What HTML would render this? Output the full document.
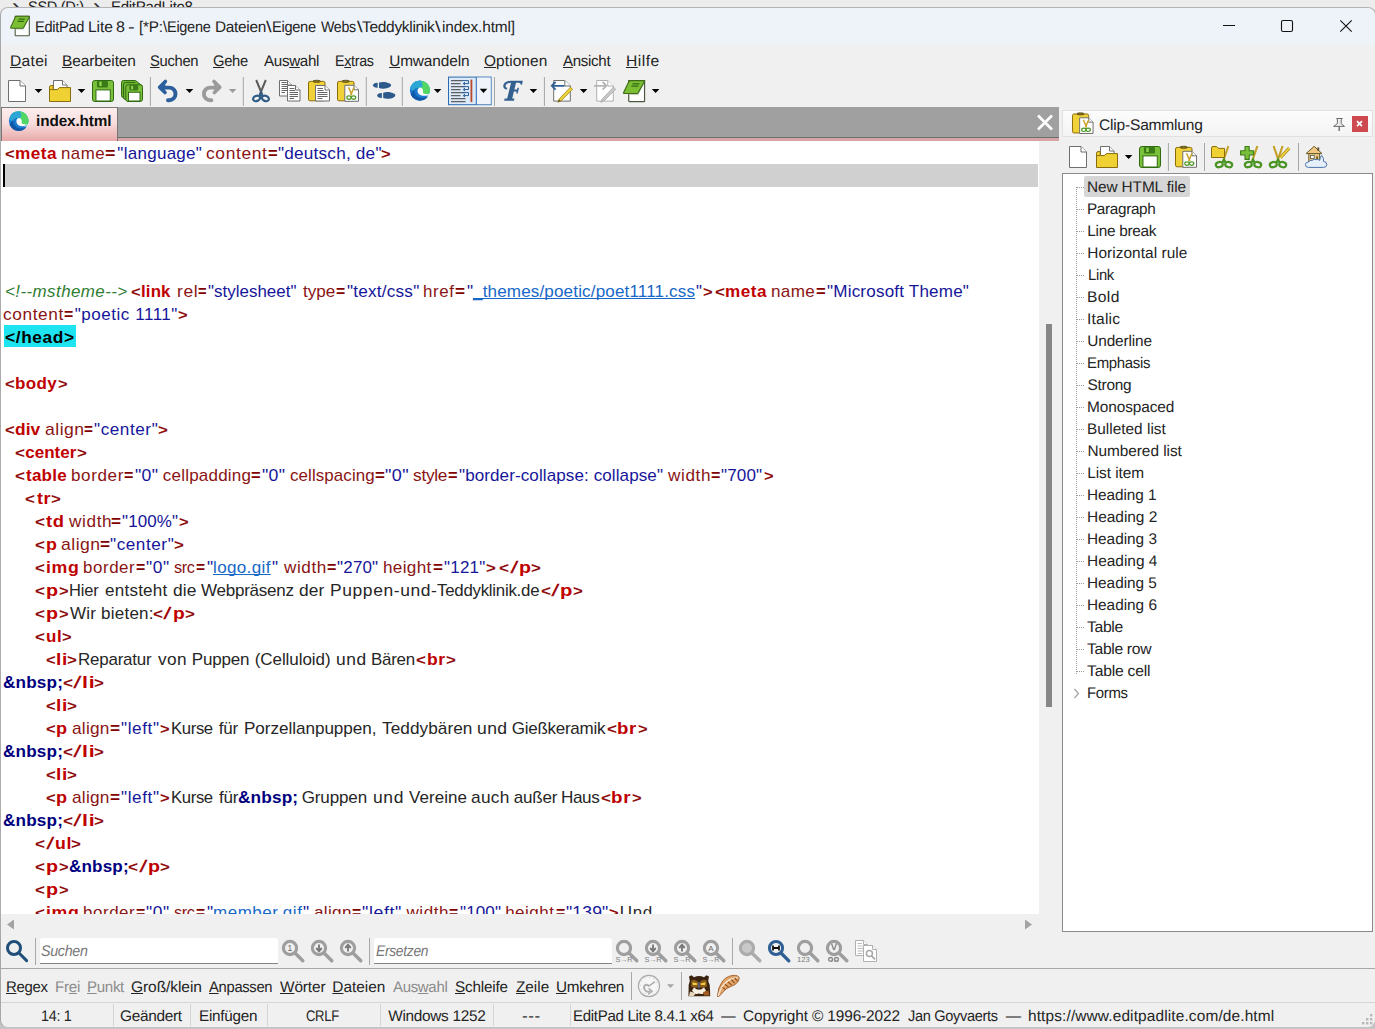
<!DOCTYPE html>
<html lang="de">
<head>
<meta charset="utf-8">
<title>EditPad Lite 8 - index.html</title>
<style>
*{box-sizing:border-box;margin:0;padding:0}
html,body{width:1375px;height:1029px;overflow:hidden}
body{background:#ececec;font-family:"Liberation Sans",sans-serif;position:relative}
.abs,svg.i{position:absolute}


#topstrip{left:0;top:0;width:1375px;height:8px;overflow:hidden;background:#ececec}
#win{left:0;top:7px;width:1376px;height:1021.2px;background:#f0f0f0;border:1px solid #b2b2b2;border-bottom-color:#c4c4c4;border-left-color:#a8a8a8;border-radius:8px 8px 8px 8px;overflow:hidden}
#shadow{left:0;top:1020px;width:1375px;height:9px;background:#c4c4c4}
#titlebar{left:0;top:8px;width:1375px;height:40px;background:linear-gradient(#eef3f9 0,#eef3f9 34px,#f0f0f0 39px)}
#tabbar{left:1px;top:107px;width:1058px;height:31px;background:#a0a0a0;border-bottom:1px solid #6e6e6e}
#pinkline{left:1px;top:138px;width:1058px;height:3px;background:#d8a5a7}
#tab{left:1px;top:107px;width:117px;height:34px;border:1px solid #777;border-bottom:none;background:linear-gradient(#fdeeee 0,#f9dede 45%,#e9a9a9 100%)}
#editor{left:1px;top:141px;width:1038.2px;height:773.4px;background:#fff;overflow:hidden}
#edborder{left:0;top:107px;width:1px;height:826px;background:#ababab}
#curline{left:2px;top:23px;width:1035px;height:23px;background:#d0d0d0}
#caret{left:2px;top:23px;width:2px;height:23px;background:#000}
#headhl{left:3px;top:184px;width:72.3px;height:22.3px;background:#1ee4f0}
#vscroll{left:1039.2px;top:141px;width:19.8px;height:774px;background:#f0f0f0}
#vthumb{left:1046.1px;top:324px;width:5.7px;height:382.7px;background:#868686}
#hscroll{left:1px;top:914.4px;width:1058px;height:19.6px;background:#f0f0f0}
.sepv{width:1px;background:#a8a8a8}
.seph{height:1px;background:#a8a8a8}
.inp{background:#fff;border-bottom:1px solid #858585;border-radius:3px 3px 0 0}
#clipbox{left:1062px;top:173px;width:311px;height:759px;background:#fff;border:1px solid #8a8a8a}
#cliphdr{left:1062px;top:110px;width:310.5px;height:27px;background:linear-gradient(#fcfcfc,#f4f4f4);border:1px solid #e1e1e1}
#treehl{left:1084px;top:175.5px;width:106px;height:21px;background:#d6d6d6;border-radius:2px}
.dotv{width:1px;background-image:linear-gradient(#9a9a9a 50%,transparent 50%);background-size:1px 2px}
.doth{height:1px;background-image:linear-gradient(90deg,#9a9a9a 50%,transparent 50%);background-size:2px 1px}

.t{position:absolute;white-space:pre;line-height:24px;height:24px;transform-origin:0 0}
.f0{font-size:22px;}
.f1{font-size:15.4px;text-rendering:geometricPrecision;}
.f2{font-size:15.4px;font-weight:700;text-rendering:geometricPrecision;}
.f3{font-size:15.4px;font-style:italic;text-rendering:geometricPrecision;}
.f4{font-size:15.5px;font-weight:700;}
.f5{font-size:17px;font-weight:700;}
.f6{font-size:17px;}
.f7{font-size:17px;font-style:italic;}
.c0{color:#333}
.c1{color:#1a1a1a}
.c2{color:#242424}
.c3{color:#101010}
.c4{color:#767676}
.c5{color:#8c8c8c}
.c6{color:#8e0c0c}
.c7{color:#c00000}
.c8{color:#8a1414}
.c9{color:#800000}
.c10{color:#16169a}
.c11{color:#2e7d32}
.c12{color:#1868c8}
.c13{color:#000}
.c14{color:#a00808}
.c15{color:#262626}
.c16{color:#000080}
.t u{text-decoration:underline;text-decoration-thickness:1px;text-underline-offset:1px;text-decoration-skip-ink:none}

</style>
</head>
<body>
<div id="topstrip" class="abs">
<div class="ln"><span class="t f0 c0" style="left:12.09px;top:-5px;letter-spacing:0.43px;transform:scaleX(1.0890);">› </span><span class="t f1 c1" style="left:28.06px;top:-4px;letter-spacing:-0.32px;transform:scaleX(0.9449);">SSD (D:) </span><span class="t f0 c0" style="left:93.41px;top:-5px;letter-spacing:0.60px;transform:scaleX(1.0774);">› </span><span class="t f1 c1" style="left:110.99px;top:-4px;letter-spacing:-0.32px;transform:scaleX(0.9784);">EditPadLite8</span></div>
</div>
<div id="shadow" class="abs"></div>
<div id="win" class="abs"></div>
<div id="titlebar" class="abs" style="border-radius:8px 8px 0 0;left:1px;width:1374px"></div>
<svg class="i" style="left:0;top:0" width="1375" height="1029" viewBox="0 0 1375 1029"><g transform="translate(10.1 15.6) scale(0.98 0.93)"><path d="M5.2 .6H19.6V21.2Q19.6 21.6 19 21.6H5.8Q5.2 21.6 5.2 21V.6Z" fill="#fdfdfd" stroke="#4c5a42" stroke-width="1.1"/><path d="M5.8 13.5H14.5V15H5.8Z" fill="#c9cfc6"/><path d="M6.6 .6H18.9Q19.9 .6 19.5 1.5L13.9 12.7Q13.5 13.5 12.6 13.5H1.2Q.1 13.5 .6 12.5L5.4 1.4Q5.8 .6 6.6 .6Z" fill="#7dbf34" stroke="#3c6c1a" stroke-width="1.1"/><path d="M8.6 3.8H15M7.6 6.2H14" fill="none" stroke="#2f6a10" stroke-width="1.2"/></g><path d="M1223 25.5H1235" fill="none" stroke="#111" stroke-width="1"/><rect x="1281.5" y="20.5" width="11" height="11" rx="1.6" fill="none" stroke="#111" stroke-width="1.1"/><path d="M1340.3 20.3L1351.7 31.7M1351.7 20.3L1340.3 31.7" fill="none" stroke="#111" stroke-width="1.1"/></svg>

<div id="tabbar" class="abs"></div>
<div id="pinkline" class="abs"></div>
<div id="tab" class="abs"></div>
<svg class="i" style="left:0;top:0" width="1375" height="1029" viewBox="0 0 1375 1029"><g transform="translate(8 80)"><path d="M.5 .5H12L17.5 6V21.5H.5Z" fill="#fff" stroke="#6f6f6f" stroke-width="1"/><path d="M12 .5V6H17.5" fill="#fff" stroke="#6f6f6f" stroke-width="1"/></g><g transform="translate(34.7 89)"><path d="M0 0H7.6L3.8 4.1Z" fill="#000"/></g><g transform="translate(49 80)"><g transform="translate(4 0)"><path d="M.5 .5H9.5L14 5V9.5H.5Z" fill="#fff" stroke="#6f6f6f" stroke-width="1"/><path d="M9.5 .5V5H14" fill="#fff" stroke="#6f6f6f" stroke-width="1"/></g><path d="M.5 21.5V7.2Q.5 5.6 2 5.6H4.2V9.6H8.2L10.6 7.6H21.5V21.5Z" fill="#efd134" stroke="#8b6c0c" stroke-width="1"/><path d="M.5 9.6H4.2" fill="none" stroke="#8b6c0c" stroke-width="1"/></g><g transform="translate(77.7 89)"><path d="M0 0H7.6L3.8 4.1Z" fill="#000"/></g><g transform="translate(92 80)"><rect x=".5" y=".5" width="21" height="21" rx="2.3" fill="#7ac03a" stroke="#2f6a10"/><rect x="4.95" y=".8" width="11" height="6.6" rx="1.5" fill="#3a7a17"/><rect x="7.26" y="1.6" width="2.42" height="4.4" fill="#8ed24e"/><rect x="3.96" y="9.9" width="14.3" height="11.1" fill="#fff" stroke="#2f6a10"/></g><g transform="translate(121 80)"><rect x=".5" y=".5" width="14" height="17" rx="2" fill="#6fb533" stroke="#2f6a10"/><rect x="2.5" y="2.5" width="15" height="17" rx="2" fill="#6fb533" stroke="#2f6a10"/><path d="M10 .5H14.5L21.5 6" fill="#6fb533" stroke="#2f6a10" stroke-width="1"/><g transform="translate(4.3 4.3)"><rect x=".5" y=".5" width="16.7" height="16.7" rx="2.3" fill="#7ac03a" stroke="#2f6a10"/><rect x="3.98" y=".8" width="8.85" height="5.31" rx="1.5" fill="#3a7a17"/><rect x="5.84" y="1.6" width="1.95" height="3.54" fill="#8ed24e"/><rect x="3.19" y="7.96" width="11.51" height="8.74" fill="#fff" stroke="#2f6a10"/></g></g><rect x="149.9" y="77" width="1" height="29" fill="#a6a6a6"/><g transform="translate(158 80)"><path d="M6.4 7.6H11.2A6.3 6.3 0 0 1 11.2 20.2H10" fill="none" stroke="#2c5f9e" stroke-width="3.9" stroke-linecap="round" stroke-linejoin="round"/><path d="M7.4 1.4L1.6 7.2L7 12.6" fill="none" stroke="#2c5f9e" stroke-width="3.6" stroke-linecap="round" stroke-linejoin="round"/><path d="M7.4 2.4L2.6 7.2L7 11.6Z" fill="#2c5f9e"/></g><g transform="translate(185.7 89)"><path d="M0 0H7.6L3.8 4.1Z" fill="#000"/></g><g transform="translate(202 80)"><g transform="translate(19.4 0) scale(-1 1)"><path d="M6.4 7.6H11.2A6.3 6.3 0 0 1 11.2 20.2H10" fill="none" stroke="#9b9b9b" stroke-width="3.9" stroke-linecap="round" stroke-linejoin="round"/><path d="M7.4 1.4L1.6 7.2L7 12.6" fill="none" stroke="#9b9b9b" stroke-width="3.6" stroke-linecap="round" stroke-linejoin="round"/><path d="M7.4 2.4L2.6 7.2L7 11.6Z" fill="#9b9b9b"/></g></g><g transform="translate(228.8 89)"><path d="M0 0H7.6L3.8 4.1Z" fill="#9b9b9b"/></g><rect x="242.8" y="77" width="1" height="29" fill="#a6a6a6"/><g transform="translate(252 80)"><path d="M4.2 0L10.2 14.5M13.8 0L7.8 14.5" fill="none" stroke="#5c5c5c" stroke-width="2"/><ellipse cx="4.6" cy="18.4" rx="3.6" ry="2.6" fill="none" stroke="#2e5c86" stroke-width="2.2" transform="rotate(-20 4.6 18.4)"/><ellipse cx="13.4" cy="18.4" rx="3.6" ry="2.6" fill="none" stroke="#2e5c86" stroke-width="2.2" transform="rotate(20 13.4 18.4)"/><path d="M7.6 16.3L9 13L10.4 16.3" fill="none" stroke="#2e5c86" stroke-width="2.2"/></g><g transform="translate(279 80)"><path d="M.5 .5H8.5L13 5V16H.5Z" fill="#fff" stroke="#6f6f6f" stroke-width="1"/><path d="M8.5 .5V5H13" fill="#fff" stroke="#6f6f6f" stroke-width="1"/><path d="M2.5 2.5H7.5M2.5 4.5H8M2.5 6.5H8M2.5 8.5H8M2.5 10.5H8M2.5 12.5H6" fill="none" stroke="#555" stroke-width="0.9"/><g transform="translate(8 5)"><path d="M.5 .5H8.5L13 5V16H.5Z" fill="#fff" stroke="#6f6f6f" stroke-width="1"/><path d="M8.5 .5V5H13" fill="#fff" stroke="#6f6f6f" stroke-width="1"/><path d="M2.5 3.5H7.5M2.5 5.5H8M2.5 7.5H11M2.5 9.5H11M2.5 11.5H11M2.5 13.5H7" fill="none" stroke="#555" stroke-width="0.9"/></g></g><g transform="translate(308 80)"><rect x=".5" y="1.4" width="16.5" height="19.4" rx="1.6" fill="#f0d138" stroke="#8b6c0c"/><ellipse cx="8.7" cy="1.3" rx="3.7" ry="1.05" fill="#8a7a2a" stroke="#5a4a10" stroke-width=".9"/><g transform="translate(7 5)"><path d="M.5 .5H10L14.5 5V16H.5Z" fill="#fff" stroke="#6f6f6f" stroke-width="1"/><path d="M10 .5V5H14.5" fill="#fff" stroke="#6f6f6f" stroke-width="1"/><path d="M2.5 3.5H8M2.5 5.5H8.5M2.5 7.5H12.5M2.5 9.5H12.5M2.5 11.5H12.5M2.5 13.5H7.5" fill="none" stroke="#555" stroke-width="0.9"/></g></g><g transform="translate(337 80)"><rect x=".5" y="1.4" width="16.5" height="19.4" rx="1.6" fill="#f0d138" stroke="#8b6c0c"/><ellipse cx="8.7" cy="1.3" rx="3.7" ry="1.05" fill="#8a7a2a" stroke="#5a4a10" stroke-width=".9"/><g transform="translate(7.3 4.8)"><path d="M.5 .5H9.7L14.2 5V16.5H.5Z" fill="#fff" stroke="#6f6f6f" stroke-width="1"/><path d="M9.7 .5V5H14.2" fill="#fff" stroke="#6f6f6f" stroke-width="1"/></g><g transform="translate(9.3 7.2)"><path d="M2.3 0L5.6 8M7.7 0L4.4 8" fill="none" stroke="#c9a227" stroke-width="1.5"/><ellipse cx="2.7" cy="10.4" rx="2.2" ry="1.7" fill="none" stroke="#4e9a26" stroke-width="1.2"/><ellipse cx="7.3" cy="10.4" rx="2.2" ry="1.7" fill="none" stroke="#4e9a26" stroke-width="1.2"/></g></g><rect x="365.8" y="77" width="1" height="29" fill="#a6a6a6"/><g transform="translate(372 80)"><g transform="translate(0.8 1.9)"><path d="M4.9 .9C2.3 .7 .2 1.9 .2 3.4C.2 4.9 2.3 6.1 4.9 5.9Z" fill="#2c5a8c"/><path d="M6.2 .7C9 -.5 14 -.2 17 1.6C18.8 2.7 18.8 4.1 17 5.2C14 7 9 7.3 6.2 6.1Z" fill="#2c5a8c"/></g><g transform="translate(5 12)"><path d="M4.9 .9C2.3 .7 .2 1.9 .2 3.4C.2 4.9 2.3 6.1 4.9 5.9Z" fill="#2c5a8c"/><path d="M6.2 .7C9 -.5 14 -.2 17 1.6C18.8 2.7 18.8 4.1 17 5.2C14 7 9 7.3 6.2 6.1Z" fill="#2c5a8c"/></g></g><rect x="401.8" y="77" width="1" height="29" fill="#a6a6a6"/><g transform="translate(409.8 80.5) scale(0.98 0.98)"><circle cx="10.2" cy="10.2" r="10.1" fill="#1a7ad0"/><path d="M.3 8.4A10.1 10.1 0 0 1 8 .4C5 3 3 6.4 2.6 10.4Z" fill="#2a9fe0"/><path d="M1 14.4A10.1 10.1 0 0 0 19 15.6C16 18.4 11 18.6 8 16.4C5.4 14.6 4.4 12 4.6 9.4C3 10.6 1.8 12.4 1 14.4Z" fill="#0f58a8"/><path d="M3.6 2.6C8 -1.2 15.4 -.6 18.8 4.4C21 7.6 21 11.4 19.6 13.6C17.6 15.2 13.4 15 12 12.4C13 10.6 12.4 8.2 10.4 7.4C7.4 6.2 4.4 8 3 10.4C2.2 7.4 2.4 4.6 3.6 2.6Z" fill="#38c4a0"/><path d="M11 .4C15 .8 17.4 2.6 18.8 4.4C21 7.6 21 11.4 19.6 13.6C17.6 15.2 13.4 15 12 12.4C13 10.6 12.6 8.4 11.2 7.6C14 6.4 13.6 2.4 11 .4Z" fill="#52d765"/><path d="M3.6 2.6C6 .6 9 0 11 .4C13 2 13.6 5.6 11.6 7.2C8.4 6 4.6 7.8 3 10.4C2.2 7.4 2.4 4.6 3.6 2.6Z" fill="#2ba6d6"/><path d="M10.6 7.2C8.6 7.4 7.6 9.4 8 11.4C8.6 14.4 11.6 15.8 14.6 15.6C16.6 15.4 18.4 14.8 19.8 13.4C17.8 14.2 14.6 14 13.4 12.4C14 10.2 12.8 7.2 10.6 7.2Z" fill="#fff"/><path d="M15.5 15.6C17.4 15.6 19.2 14.8 20.3 13.1L20.6 14.2C20 15.2 19.4 16 18.6 16.6Z" fill="#fff" opacity=".55"/></g><g transform="translate(433.8 89)"><path d="M0 0H7.6L3.8 4.1Z" fill="#000"/></g><g transform="translate(448 76.6)"><rect x=".5" y=".5" width="42.6" height="27.6" fill="#dceafa" stroke="#2b6cb0"/><rect x="28.5" y="1" width="14.1" height="26.6" fill="#f0f4fa"/><path d="M28.3 .5V28" fill="none" stroke="#2b6cb0" stroke-width="1"/><path d="M3 4H14M3 7H12.5M3 10H17M3 13H12.5M3 16H17M3 19H12.5M3 22H17.5M3 25H17.5" fill="none" stroke="#5e5e5e" stroke-width="1.1"/><path d="M14 4H20.5V7H15.5M17 5.6L15.2 7L17 8.4M14 10H20.5V13H15.5M17 11.6L15.2 13L17 14.4M14 16H20.5V19H15.5M17 17.6L15.2 19L17 20.4" fill="none" stroke="#2d5f94" stroke-width="1"/><path d="M23.4 3V25.5" fill="none" stroke="#b8492a" stroke-width="1.8"/><g transform="translate(31.7 12.2)"><path d="M0 0H7.6L3.8 4.1Z" fill="#000"/></g></g><rect x="494" y="77" width="1" height="29" fill="#a6a6a6"/><g transform="translate(502.6 80.4)"><path d="M3.4 9.2C1.2 8.6 -.2 6.2 1.2 3.6C2.8 .8 6.6 .3 10 .3H20.2L19.4 4.4H18.2C18.2 2.8 17 2.3 15.4 2.3H13.4L11.8 9H14.4L14.9 7.4H16.4L15.1 13H13.6L14 11.2H11.3L9.6 18.2H11.8L11.4 20.3H1.6L2 18.2H4.6L8.4 2.4C5.2 2.4 3 3.8 3 5.6C3 6.6 3.6 7.2 4.4 7.4C4.8 8.2 4.4 9 3.4 9.2Z" fill="#33608f"/></g><g transform="translate(529.6 89)"><path d="M0 0H7.6L3.8 4.1Z" fill="#000"/></g><rect x="543.9" y="77" width="1" height="29" fill="#a6a6a6"/><g transform="translate(551 80)"><g transform="translate(2.2 0)"><path d="M.5 .5H11.6L17.1 6V21.1H.5Z" fill="#fff" stroke="#6f6f6f" stroke-width="1"/><path d="M11.6 .5V6H17.1" fill="#fff" stroke="#6f6f6f" stroke-width="1"/></g><path d="M.8 5.8H13.4M4.6 2L.8 5.8L4.6 9.6" fill="none" stroke="#2d5f94" stroke-width="1.8"/><path d="M19.4 7.2L8 19.2L6.8 22.2L10 21L21.6 9.2Z" fill="#ecd138" stroke="#a48a1c" stroke-width="0.8"/><path d="M8 19.2L6.8 22.2L10 21Z" fill="#6b5a2a"/></g><g transform="translate(579.8 89)"><path d="M0 0H7.6L3.8 4.1Z" fill="#000"/></g><g transform="translate(594 80)"><g transform="translate(2.2 0)"><path d="M.5 .5H11.6L17.1 6V21.1H.5Z" fill="#fff" stroke="#b0b0b0" stroke-width="1"/><path d="M11.6 .5V6H17.1" fill="#fff" stroke="#b0b0b0" stroke-width="1"/></g><path d="M0 5.8H12M8.6 2L12.4 5.8L8.6 9.6" fill="none" stroke="#b5b5b5" stroke-width="1.8"/><path d="M19.4 7.2L8 19.2L6.8 22.2L10 21L21.6 9.2Z" fill="#c8c8c8" stroke="#a4a4a4" stroke-width="0.8"/></g><g transform="translate(623 80) scale(1.1 1)"><path d="M5.2 .6H19.6V21.2Q19.6 21.6 19 21.6H5.8Q5.2 21.6 5.2 21V.6Z" fill="#fdfdfd" stroke="#4c5a42" stroke-width="1.1"/><path d="M5.8 13.5H14.5V15H5.8Z" fill="#c9cfc6"/><path d="M6.6 .6H18.9Q19.9 .6 19.5 1.5L13.9 12.7Q13.5 13.5 12.6 13.5H1.2Q.1 13.5 .6 12.5L5.4 1.4Q5.8 .6 6.6 .6Z" fill="#7dbf34" stroke="#3c6c1a" stroke-width="1.1"/><path d="M8.6 3.8H15M7.6 6.2H14" fill="none" stroke="#2f6a10" stroke-width="1.2"/></g><g transform="translate(651.8 89)"><path d="M0 0H7.6L3.8 4.1Z" fill="#000"/></g><g transform="translate(8.8 111.2) scale(0.96 0.96)"><circle cx="10.2" cy="10.2" r="10.1" fill="#1a7ad0"/><path d="M.3 8.4A10.1 10.1 0 0 1 8 .4C5 3 3 6.4 2.6 10.4Z" fill="#2a9fe0"/><path d="M1 14.4A10.1 10.1 0 0 0 19 15.6C16 18.4 11 18.6 8 16.4C5.4 14.6 4.4 12 4.6 9.4C3 10.6 1.8 12.4 1 14.4Z" fill="#0f58a8"/><path d="M3.6 2.6C8 -1.2 15.4 -.6 18.8 4.4C21 7.6 21 11.4 19.6 13.6C17.6 15.2 13.4 15 12 12.4C13 10.6 12.4 8.2 10.4 7.4C7.4 6.2 4.4 8 3 10.4C2.2 7.4 2.4 4.6 3.6 2.6Z" fill="#38c4a0"/><path d="M11 .4C15 .8 17.4 2.6 18.8 4.4C21 7.6 21 11.4 19.6 13.6C17.6 15.2 13.4 15 12 12.4C13 10.6 12.6 8.4 11.2 7.6C14 6.4 13.6 2.4 11 .4Z" fill="#52d765"/><path d="M3.6 2.6C6 .6 9 0 11 .4C13 2 13.6 5.6 11.6 7.2C8.4 6 4.6 7.8 3 10.4C2.2 7.4 2.4 4.6 3.6 2.6Z" fill="#2ba6d6"/><path d="M10.6 7.2C8.6 7.4 7.6 9.4 8 11.4C8.6 14.4 11.6 15.8 14.6 15.6C16.6 15.4 18.4 14.8 19.8 13.4C17.8 14.2 14.6 14 13.4 12.4C14 10.2 12.8 7.2 10.6 7.2Z" fill="#fff"/><path d="M15.5 15.6C17.4 15.6 19.2 14.8 20.3 13.1L20.6 14.2C20 15.2 19.4 16 18.6 16.6Z" fill="#fff" opacity=".55"/></g><path d="M1038 115.5L1052 129.5M1052 115.5L1038 129.5" fill="none" stroke="#fff" stroke-width="2.6"/></svg>

<div id="edborder" class="abs"></div>
<div id="editor" class="abs">
<div id="curline" class="abs"></div>
<div id="caret" class="abs"></div>
<div id="headhl" class="abs"></div>
<div class="abs" style="left:-1px;top:-141px;width:1100px;height:1029px">
<div class="ln"><span class="t f4 c6" style="left:4.69px;top:142px;transform:scaleX(1.0675);">&lt;</span><span class="t f5 c7" style="left:15.41px;top:142px;letter-spacing:0.45px;transform:scaleX(1.0111);">meta </span><span class="t f6 c8" style="left:61.16px;top:142px;letter-spacing:0.47px;transform:scaleX(0.9904);">name</span><span class="t f5 c9" style="left:105.24px;top:142px;transform:scaleX(1.0474);">=</span><span class="t f6 c10" style="left:117.34px;top:142px;letter-spacing:0.28px;">"language" </span><span class="t f6 c8" style="left:206.39px;top:142px;letter-spacing:0.60px;transform:scaleX(1.0247);">content</span><span class="t f5 c9" style="left:267.99px;top:142px;transform:scaleX(0.9741);">=</span><span class="t f6 c10" style="left:278.33px;top:142px;letter-spacing:0.20px;transform:scaleX(1.0109);">"deutsch, de"</span><span class="t f4 c6" style="left:380.63px;top:142px;transform:scaleX(1.0622);">&gt;</span></div>
<div class="ln"><span class="t f7 c11" style="left:4.55px;top:280px;letter-spacing:0.43px;transform:scaleX(0.9960);">&lt;!--mstheme--&gt;</span><span class="t f4 c6" style="left:130.52px;top:280px;transform:scaleX(1.0666);">&lt;</span><span class="t f5 c7" style="left:141.06px;top:280px;letter-spacing:0.13px;transform:scaleX(0.9919);">link </span><span class="t f6 c8" style="left:176.71px;top:280px;letter-spacing:0.60px;transform:scaleX(1.0256);">rel</span><span class="t f5 c9" style="left:198.02px;top:280px;transform:scaleX(0.8654);">=</span><span class="t f6 c10" style="left:208.24px;top:280px;letter-spacing:0.03px;transform:scaleX(0.9941);">"stylesheet" </span><span class="t f6 c8" style="left:302.86px;top:280px;letter-spacing:-0.06px;transform:scaleX(1.0058);">type</span><span class="t f5 c9" style="left:335.54px;top:280px;transform:scaleX(0.9230);">=</span><span class="t f6 c10" style="left:346.63px;top:280px;letter-spacing:0.21px;transform:scaleX(1.0091);">"text/css" </span><span class="t f6 c8" style="left:423.39px;top:280px;letter-spacing:0.57px;transform:scaleX(0.9942);">href</span><span class="t f5 c9" style="left:455.30px;top:280px;transform:scaleX(1.0060);">=</span><span class="t f6 c10" style="left:467.21px;top:280px;transform:scaleX(1.0166);">"</span><span class="t f6 c12" style="left:473.43px;top:280px;letter-spacing:0.14px;transform:scaleX(1.0042);"><u>_themes/poetic/poet1111.css</u></span><span class="t f6 c10" style="left:695.68px;top:280px;transform:scaleX(0.9833);">"</span><span class="t f4 c6" style="left:702.63px;top:280px;transform:scaleX(1.0622);">&gt;</span><span class="t f4 c6" style="left:715.38px;top:280px;transform:scaleX(1.0957);">&lt;</span><span class="t f5 c7" style="left:725.22px;top:280px;letter-spacing:0.53px;transform:scaleX(1.0046);">meta </span><span class="t f6 c8" style="left:771.37px;top:280px;letter-spacing:0.32px;transform:scaleX(1.0073);">name</span><span class="t f5 c9" style="left:815.74px;top:280px;transform:scaleX(0.9816);">=</span><span class="t f6 c10" style="left:826.80px;top:280px;letter-spacing:0.20px;transform:scaleX(1.0025);">"Microsoft Theme"</span></div>
<div class="ln"><span class="t f6 c8" style="left:3.30px;top:303px;letter-spacing:0.60px;transform:scaleX(1.0151);">content</span><span class="t f5 c9" style="left:63.98px;top:303px;transform:scaleX(0.9321);">=</span><span class="t f6 c10" style="left:74.73px;top:303px;letter-spacing:0.54px;">"poetic 1111"</span><span class="t f4 c6" style="left:177.63px;top:303px;transform:scaleX(1.0622);">&gt;</span></div>
<div class="ln"><span class="t f5 c13" style="left:4.70px;top:326px;letter-spacing:0.60px;transform:scaleX(1.0197);">&lt;/head&gt;</span></div>
<div class="ln"><span class="t f4 c6" style="left:4.69px;top:372px;transform:scaleX(1.0675);">&lt;</span><span class="t f5 c7" style="left:15.30px;top:372px;letter-spacing:0.32px;transform:scaleX(1.0014);">body</span><span class="t f4 c6" style="left:58.33px;top:372px;transform:scaleX(1.0630);">&gt;</span></div>
<div class="ln"><span class="t f4 c6" style="left:4.69px;top:418px;transform:scaleX(1.0675);">&lt;</span><span class="t f5 c7" style="left:14.89px;top:418px;letter-spacing:0.07px;transform:scaleX(1.0228);">div </span><span class="t f6 c8" style="left:45.24px;top:418px;letter-spacing:0.46px;transform:scaleX(1.0345);">align</span><span class="t f5 c9" style="left:83.60px;top:418px;transform:scaleX(0.8978);">=</span><span class="t f6 c10" style="left:94.27px;top:418px;letter-spacing:0.56px;transform:scaleX(1.0075);">"center"</span><span class="t f4 c6" style="left:158.28px;top:418px;transform:scaleX(1.0857);">&gt;</span></div>
<div class="ln"><span class="t f4 c6" style="left:14.87px;top:441px;transform:scaleX(1.0957);">&lt;</span><span class="t f5 c7" style="left:25.35px;top:441px;letter-spacing:-0.01px;">center</span><span class="t f4 c6" style="left:77.45px;top:441px;transform:scaleX(1.0863);">&gt;</span></div>
<div class="ln"><span class="t f4 c6" style="left:14.87px;top:464px;transform:scaleX(1.0957);">&lt;</span><span class="t f5 c7" style="left:26.31px;top:464px;letter-spacing:0.24px;transform:scaleX(1.0016);">table </span><span class="t f6 c8" style="left:71.06px;top:464px;letter-spacing:0.60px;transform:scaleX(1.0041);">border</span><span class="t f5 c9" style="left:124.26px;top:464px;transform:scaleX(0.9455);">=</span><span class="t f6 c10" style="left:134.75px;top:464px;letter-spacing:0.32px;transform:scaleX(1.0376);">"0" </span><span class="t f6 c8" style="left:162.80px;top:464px;letter-spacing:0.21px;">cellpadding</span><span class="t f5 c9" style="left:250.96px;top:464px;transform:scaleX(0.9642);">=</span><span class="t f6 c10" style="left:262.15px;top:464px;letter-spacing:0.32px;transform:scaleX(1.0377);">"0" </span><span class="t f6 c8" style="left:290.20px;top:464px;letter-spacing:0.10px;transform:scaleX(0.9951);">cellspacing</span><span class="t f5 c9" style="left:374.71px;top:464px;transform:scaleX(0.9912);">=</span><span class="t f6 c10" style="left:385.48px;top:464px;letter-spacing:0.42px;transform:scaleX(1.0584);">"0" </span><span class="t f6 c8" style="left:413.29px;top:464px;letter-spacing:-0.26px;transform:scaleX(1.0167);">style</span><span class="t f5 c9" style="left:447.96px;top:464px;transform:scaleX(0.9642);">=</span><span class="t f6 c10" style="left:458.86px;top:464px;letter-spacing:0.09px;transform:scaleX(1.0028);">"border-collapse: collapse" </span><span class="t f6 c8" style="left:667.58px;top:464px;letter-spacing:0.60px;transform:scaleX(1.0109);">width</span><span class="t f5 c9" style="left:710.82px;top:464px;transform:scaleX(0.9403);">=</span><span class="t f6 c10" style="left:721.48px;top:464px;letter-spacing:0.12px;transform:scaleX(1.0032);">"700"</span><span class="t f4 c6" style="left:764.12px;top:464px;transform:scaleX(1.0622);">&gt;</span></div>
<div class="ln"><span class="t f4 c6" style="left:24.84px;top:487px;transform:scaleX(1.0928);">&lt;</span><span class="t f5 c7" style="left:36.52px;top:487px;letter-spacing:0.60px;transform:scaleX(1.0489);">tr</span><span class="t f4 c6" style="left:50.80px;top:487px;transform:scaleX(1.0857);">&gt;</span></div>
<div class="ln"><span class="t f4 c6" style="left:35.27px;top:510px;transform:scaleX(1.0925);">&lt;</span><span class="t f5 c7" style="left:46.49px;top:510px;letter-spacing:0.60px;transform:scaleX(1.0811);">td </span><span class="t f6 c8" style="left:69.07px;top:510px;letter-spacing:0.60px;transform:scaleX(1.0119);">width</span><span class="t f5 c9" style="left:111.29px;top:510px;transform:scaleX(1.0060);">=</span><span class="t f6 c10" style="left:122.36px;top:510px;letter-spacing:0.11px;transform:scaleX(0.9982);">"100%"</span><span class="t f4 c6" style="left:179.33px;top:510px;transform:scaleX(1.0630);">&gt;</span></div>
<div class="ln"><span class="t f4 c6" style="left:35.27px;top:533px;transform:scaleX(1.0925);">&lt;</span><span class="t f5 c7" style="left:45.69px;top:533px;letter-spacing:0.59px;transform:scaleX(1.0528);">p </span><span class="t f6 c8" style="left:61.24px;top:533px;letter-spacing:0.46px;transform:scaleX(1.0345);">align</span><span class="t f5 c9" style="left:99.67px;top:533px;transform:scaleX(1.0096);">=</span><span class="t f6 c10" style="left:110.27px;top:533px;letter-spacing:0.56px;transform:scaleX(1.0075);">"center"</span><span class="t f4 c6" style="left:174.28px;top:533px;transform:scaleX(1.0857);">&gt;</span></div>
<div class="ln"><span class="t f4 c6" style="left:35.27px;top:556px;transform:scaleX(1.0925);">&lt;</span><span class="t f5 c7" style="left:45.64px;top:556px;letter-spacing:0.60px;transform:scaleX(1.0441);">img </span><span class="t f6 c8" style="left:82.64px;top:556px;letter-spacing:0.56px;transform:scaleX(0.9954);">border</span><span class="t f5 c9" style="left:135.74px;top:556px;transform:scaleX(0.9329);">=</span><span class="t f6 c10" style="left:146.36px;top:556px;letter-spacing:0.60px;transform:scaleX(1.0194);">"0" </span><span class="t f6 c8" style="left:173.70px;top:556px;letter-spacing:-0.42px;transform:scaleX(0.9595);">src</span><span class="t f5 c9" style="left:195.50px;top:556px;transform:scaleX(0.9118);">=</span><span class="t f6 c10" style="left:206.71px;top:556px;transform:scaleX(1.0166);">"</span><span class="t f6 c12" style="left:213.38px;top:556px;letter-spacing:0.35px;transform:scaleX(1.0024);"><u>logo.gif</u></span><span class="t f6 c10" style="left:272.35px;top:556px;letter-spacing:0.04px;transform:scaleX(1.0047);">" </span><span class="t f6 c8" style="left:284.47px;top:556px;letter-spacing:0.57px;transform:scaleX(1.0084);">width</span><span class="t f5 c9" style="left:326.82px;top:556px;transform:scaleX(0.9437);">=</span><span class="t f6 c10" style="left:337.10px;top:556px;letter-spacing:0.15px;">"270" </span><span class="t f6 c8" style="left:383.00px;top:556px;letter-spacing:0.33px;transform:scaleX(1.0084);">height</span><span class="t f5 c9" style="left:432.90px;top:556px;">=</span><span class="t f6 c10" style="left:443.62px;top:556px;letter-spacing:0.21px;transform:scaleX(0.9982);">"121"</span><span class="t f4 c6" style="left:486.28px;top:556px;transform:scaleX(1.0857);">&gt;</span><span class="t f4 c6" style="left:499.24px;top:556px;transform:scaleX(1.1075);">&lt;</span><span class="t f5 c14" style="left:509.50px;top:556px;transform-origin:0 17px;transform:scaleX(1.1598) skewX(-13deg);">/</span><span class="t f5 c7" style="left:518.56px;top:556px;transform:scaleX(1.1559);">p</span><span class="t f4 c6" style="left:531.45px;top:556px;transform:scaleX(1.0863);">&gt;</span></div>
<div class="ln"><span class="t f4 c6" style="left:35.27px;top:579px;transform:scaleX(1.0925);">&lt;</span><span class="t f5 c7" style="left:45.60px;top:579px;transform:scaleX(1.1611);">p</span><span class="t f4 c6" style="left:58.70px;top:579px;transform:scaleX(1.0605);">&gt;</span><span class="t f6 c15" style="left:69.44px;top:579px;letter-spacing:-0.18px;transform:scaleX(0.9673);">Hier </span><span class="t f6 c15" style="left:104.79px;top:579px;letter-spacing:0.21px;transform:scaleX(1.0047);">entsteht </span><span class="t f6 c15" style="left:172.76px;top:579px;letter-spacing:0.07px;transform:scaleX(1.0209);">die </span><span class="t f6 c15" style="left:201.31px;top:579px;letter-spacing:-0.25px;transform:scaleX(1.0021);">Webpräsenz </span><span class="t f6 c15" style="left:298.88px;top:579px;letter-spacing:0.10px;transform:scaleX(1.0211);">der </span><span class="t f6 c15" style="left:330.23px;top:579px;letter-spacing:0.60px;transform:scaleX(1.0251);">Puppen-und-</span><span class="t f6 c15" style="left:436.87px;top:579px;letter-spacing:-0.25px;transform:scaleX(0.9903);">Teddyklinik.de</span><span class="t f4 c6" style="left:540.66px;top:579px;transform:scaleX(1.1036);">&lt;</span><span class="t f5 c14" style="left:551.08px;top:579px;transform-origin:0 17px;transform:scaleX(1.1598) skewX(-13deg);">/</span><span class="t f5 c7" style="left:559.93px;top:579px;transform:scaleX(1.1907);">p</span><span class="t f4 c6" style="left:572.83px;top:579px;transform:scaleX(1.0888);">&gt;</span></div>
<div class="ln"><span class="t f4 c6" style="left:35.27px;top:602px;transform:scaleX(1.0925);">&lt;</span><span class="t f5 c7" style="left:45.60px;top:602px;transform:scaleX(1.1611);">p</span><span class="t f4 c6" style="left:58.70px;top:602px;transform:scaleX(1.0605);">&gt;</span><span class="t f6 c15" style="left:69.93px;top:602px;letter-spacing:0.21px;transform:scaleX(1.0020);">Wir bieten:</span><span class="t f4 c6" style="left:152.82px;top:602px;transform:scaleX(1.1019);">&lt;</span><span class="t f5 c14" style="left:163.44px;top:602px;transform-origin:0 17px;transform:scaleX(1.1668) skewX(-13deg);">/</span><span class="t f5 c7" style="left:172.64px;top:602px;transform:scaleX(1.1309);">p</span><span class="t f4 c6" style="left:184.83px;top:602px;transform:scaleX(1.0888);">&gt;</span></div>
<div class="ln"><span class="t f4 c6" style="left:35.27px;top:625px;transform:scaleX(1.0925);">&lt;</span><span class="t f5 c7" style="left:45.74px;top:625px;letter-spacing:0.60px;transform:scaleX(0.9974);">ul</span><span class="t f4 c6" style="left:62.12px;top:625px;transform:scaleX(1.0622);">&gt;</span></div>
<div class="ln"><span class="t f4 c6" style="left:45.52px;top:648px;transform:scaleX(1.0666);">&lt;</span><span class="t f5 c7" style="left:55.57px;top:648px;letter-spacing:0.60px;transform:scaleX(1.1235);">li</span><span class="t f4 c6" style="left:66.80px;top:648px;transform:scaleX(1.0857);">&gt;</span><span class="t f6 c15" style="left:78.32px;top:648px;letter-spacing:-0.21px;transform:scaleX(0.9956);">Reparatur </span><span class="t f6 c15" style="left:158.25px;top:648px;letter-spacing:0.37px;transform:scaleX(1.0137);">von </span><span class="t f6 c15" style="left:191.75px;top:648px;letter-spacing:-0.17px;">Puppen </span><span class="t f6 c15" style="left:254.74px;top:648px;letter-spacing:-0.07px;">(Celluloid) </span><span class="t f6 c15" style="left:335.58px;top:648px;letter-spacing:0.60px;transform:scaleX(1.0221);">und </span><span class="t f6 c15" style="left:370.62px;top:648px;letter-spacing:-0.25px;transform:scaleX(0.9938);">Bären</span><span class="t f4 c6" style="left:416.33px;top:648px;transform:scaleX(1.0928);">&lt;</span><span class="t f5 c7" style="left:426.91px;top:648px;letter-spacing:0.60px;transform:scaleX(1.0330);">br</span><span class="t f4 c6" style="left:446.35px;top:648px;transform:scaleX(1.0888);">&gt;</span></div>
<div class="ln"><span class="t f5 c16" style="left:3.25px;top:671px;letter-spacing:0.16px;transform:scaleX(1.0088);">&amp;nbsp;</span><span class="t f4 c6" style="left:62.83px;top:671px;transform:scaleX(1.1067);">&lt;</span><span class="t f5 c14" style="left:72.93px;top:671px;transform-origin:0 17px;transform:scaleX(1.1668) skewX(-13deg);">/</span><span class="t f5 c7" style="left:81.78px;top:671px;letter-spacing:0.60px;transform:scaleX(1.2620);">li</span><span class="t f4 c6" style="left:94.28px;top:671px;transform:scaleX(1.0857);">&gt;</span></div>
<div class="ln"><span class="t f4 c6" style="left:45.52px;top:694px;transform:scaleX(1.0666);">&lt;</span><span class="t f5 c7" style="left:55.57px;top:694px;letter-spacing:0.60px;transform:scaleX(1.1235);">li</span><span class="t f4 c6" style="left:66.80px;top:694px;transform:scaleX(1.0857);">&gt;</span></div>
<div class="ln"><span class="t f4 c6" style="left:45.52px;top:717px;transform:scaleX(1.0666);">&lt;</span><span class="t f5 c7" style="left:55.84px;top:717px;letter-spacing:0.60px;transform:scaleX(1.0666);">p </span><span class="t f6 c8" style="left:72.15px;top:717px;letter-spacing:0.23px;transform:scaleX(1.0146);">align</span><span class="t f5 c9" style="left:110.44px;top:717px;transform:scaleX(1.0096);">=</span><span class="t f6 c10" style="left:120.73px;top:717px;letter-spacing:0.60px;transform:scaleX(1.0061);">"left"</span><span class="t f4 c6" style="left:160.12px;top:717px;transform:scaleX(1.0622);">&gt;</span><span class="t f6 c15" style="left:170.89px;top:717px;letter-spacing:-0.37px;transform:scaleX(0.9816);">Kurse </span><span class="t f6 c15" style="left:218.66px;top:717px;letter-spacing:-0.16px;">für </span><span class="t f6 c15" style="left:244.30px;top:717px;letter-spacing:-0.05px;transform:scaleX(1.0070);">Porzellanpuppen, </span><span class="t f6 c15" style="left:382.33px;top:717px;letter-spacing:0.07px;transform:scaleX(1.0105);">Teddybären </span><span class="t f6 c15" style="left:477.34px;top:717px;letter-spacing:0.36px;transform:scaleX(1.0321);">und </span><span class="t f6 c15" style="left:511.83px;top:717px;letter-spacing:-0.28px;">Gießkeramik</span><span class="t f4 c6" style="left:607.38px;top:717px;transform:scaleX(1.0957);">&lt;</span><span class="t f5 c7" style="left:616.87px;top:717px;letter-spacing:0.60px;transform:scaleX(1.0968);">br</span><span class="t f4 c6" style="left:637.70px;top:717px;transform:scaleX(1.0605);">&gt;</span></div>
<div class="ln"><span class="t f5 c16" style="left:3.25px;top:740px;letter-spacing:0.16px;transform:scaleX(1.0088);">&amp;nbsp;</span><span class="t f4 c6" style="left:62.83px;top:740px;transform:scaleX(1.1067);">&lt;</span><span class="t f5 c14" style="left:72.93px;top:740px;transform-origin:0 17px;transform:scaleX(1.1668) skewX(-13deg);">/</span><span class="t f5 c7" style="left:81.78px;top:740px;letter-spacing:0.60px;transform:scaleX(1.2620);">li</span><span class="t f4 c6" style="left:94.28px;top:740px;transform:scaleX(1.0857);">&gt;</span></div>
<div class="ln"><span class="t f4 c6" style="left:45.52px;top:763px;transform:scaleX(1.0666);">&lt;</span><span class="t f5 c7" style="left:55.57px;top:763px;letter-spacing:0.60px;transform:scaleX(1.1235);">li</span><span class="t f4 c6" style="left:66.80px;top:763px;transform:scaleX(1.0857);">&gt;</span></div>
<div class="ln"><span class="t f4 c6" style="left:45.52px;top:786px;transform:scaleX(1.0666);">&lt;</span><span class="t f5 c7" style="left:55.84px;top:786px;letter-spacing:0.60px;transform:scaleX(1.0666);">p </span><span class="t f6 c8" style="left:72.15px;top:786px;letter-spacing:0.23px;transform:scaleX(1.0146);">align</span><span class="t f5 c9" style="left:110.44px;top:786px;transform:scaleX(1.0096);">=</span><span class="t f6 c10" style="left:120.73px;top:786px;letter-spacing:0.60px;transform:scaleX(1.0061);">"left"</span><span class="t f4 c6" style="left:160.12px;top:786px;transform:scaleX(1.0622);">&gt;</span><span class="t f6 c15" style="left:170.89px;top:786px;letter-spacing:-0.37px;transform:scaleX(0.9816);">Kurse </span><span class="t f6 c15" style="left:218.66px;top:786px;letter-spacing:-0.24px;transform:scaleX(0.9988);">für</span><span class="t f5 c16" style="left:238.49px;top:786px;letter-spacing:0.13px;transform:scaleX(1.0142);">&amp;nbsp; </span><span class="t f6 c15" style="left:301.71px;top:786px;letter-spacing:-0.13px;">Gruppen </span><span class="t f6 c15" style="left:373.32px;top:786px;letter-spacing:0.60px;transform:scaleX(1.0271);">und </span><span class="t f6 c15" style="left:408.65px;top:786px;letter-spacing:0.06px;transform:scaleX(0.9988);">Vereine </span><span class="t f6 c15" style="left:471.26px;top:786px;letter-spacing:0.28px;transform:scaleX(1.0169);">auch </span><span class="t f6 c15" style="left:513.77px;top:786px;letter-spacing:-0.21px;">außer </span><span class="t f6 c15" style="left:561.26px;top:786px;letter-spacing:-0.42px;transform:scaleX(1.0075);">Haus</span><span class="t f4 c6" style="left:600.87px;top:786px;transform:scaleX(1.0957);">&lt;</span><span class="t f5 c7" style="left:611.31px;top:786px;letter-spacing:0.60px;transform:scaleX(1.1061);">br</span><span class="t f4 c6" style="left:632.12px;top:786px;transform:scaleX(1.0622);">&gt;</span></div>
<div class="ln"><span class="t f5 c16" style="left:3.25px;top:809px;letter-spacing:0.16px;transform:scaleX(1.0088);">&amp;nbsp;</span><span class="t f4 c6" style="left:62.83px;top:809px;transform:scaleX(1.1067);">&lt;</span><span class="t f5 c14" style="left:72.93px;top:809px;transform-origin:0 17px;transform:scaleX(1.1668) skewX(-13deg);">/</span><span class="t f5 c7" style="left:81.78px;top:809px;letter-spacing:0.60px;transform:scaleX(1.2620);">li</span><span class="t f4 c6" style="left:94.28px;top:809px;transform:scaleX(1.0857);">&gt;</span></div>
<div class="ln"><span class="t f4 c6" style="left:35.48px;top:832px;transform:scaleX(1.1075);">&lt;</span><span class="t f5 c14" style="left:46.00px;top:832px;transform-origin:0 17px;transform:scaleX(1.1459) skewX(-13deg);">/</span><span class="t f5 c7" style="left:54.63px;top:832px;letter-spacing:0.60px;transform:scaleX(1.0400);">ul</span><span class="t f4 c6" style="left:70.83px;top:832px;transform:scaleX(1.0888);">&gt;</span></div>
<div class="ln"><span class="t f4 c6" style="left:35.27px;top:855px;transform:scaleX(1.0925);">&lt;</span><span class="t f5 c7" style="left:45.60px;top:855px;transform:scaleX(1.1611);">p</span><span class="t f4 c6" style="left:58.70px;top:855px;transform:scaleX(1.0605);">&gt;</span><span class="t f5 c16" style="left:68.64px;top:855px;letter-spacing:0.14px;transform:scaleX(1.0055);">&amp;nbsp;</span><span class="t f4 c6" style="left:128.24px;top:855px;transform:scaleX(1.1075);">&lt;</span><span class="t f5 c14" style="left:138.50px;top:855px;transform-origin:0 17px;transform:scaleX(1.1598) skewX(-13deg);">/</span><span class="t f5 c7" style="left:147.62px;top:855px;transform:scaleX(1.1563);">p</span><span class="t f4 c6" style="left:160.28px;top:855px;transform:scaleX(1.0857);">&gt;</span></div>
<div class="ln"><span class="t f4 c6" style="left:35.27px;top:878px;transform:scaleX(1.0925);">&lt;</span><span class="t f5 c7" style="left:45.60px;top:878px;transform:scaleX(1.1611);">p</span><span class="t f4 c6" style="left:58.70px;top:878px;transform:scaleX(1.0605);">&gt;</span></div>
<div class="ln"><span class="t f4 c6" style="left:35.27px;top:901px;transform:scaleX(1.0925);">&lt;</span><span class="t f5 c7" style="left:45.64px;top:901px;letter-spacing:0.60px;transform:scaleX(1.0441);">img </span><span class="t f6 c8" style="left:82.64px;top:901px;letter-spacing:0.56px;transform:scaleX(0.9954);">border</span><span class="t f5 c9" style="left:135.74px;top:901px;transform:scaleX(0.9329);">=</span><span class="t f6 c10" style="left:146.36px;top:901px;letter-spacing:0.60px;transform:scaleX(1.0194);">"0" </span><span class="t f6 c8" style="left:173.70px;top:901px;letter-spacing:-0.42px;transform:scaleX(0.9595);">src</span><span class="t f5 c9" style="left:195.50px;top:901px;transform:scaleX(0.9118);">=</span><span class="t f6 c10" style="left:206.71px;top:901px;transform:scaleX(1.0166);">"</span><span class="t f6 c12" style="left:212.96px;top:901px;letter-spacing:0.54px;"><u>member.gif</u></span><span class="t f6 c10" style="left:302.52px;top:901px;letter-spacing:-0.36px;transform:scaleX(1.0192);">" </span><span class="t f6 c8" style="left:313.66px;top:901px;letter-spacing:0.28px;transform:scaleX(1.0111);">align</span><span class="t f5 c9" style="left:351.54px;top:901px;transform:scaleX(0.9230);">=</span><span class="t f6 c10" style="left:362.31px;top:901px;letter-spacing:0.59px;transform:scaleX(1.0413);">"left" </span><span class="t f6 c8" style="left:406.48px;top:901px;letter-spacing:0.60px;">width</span><span class="t f5 c9" style="left:449.02px;top:901px;transform:scaleX(0.9230);">=</span><span class="t f6 c10" style="left:460.12px;top:901px;letter-spacing:0.09px;transform:scaleX(1.0052);">"100" </span><span class="t f6 c8" style="left:505.13px;top:901px;letter-spacing:0.52px;">height</span><span class="t f5 c9" style="left:555.74px;top:901px;transform:scaleX(0.9329);">=</span><span class="t f6 c10" style="left:566.23px;top:901px;letter-spacing:0.14px;transform:scaleX(1.0322);">"139"</span><span class="t f4 c6" style="left:608.63px;top:901px;transform:scaleX(1.0622);">&gt;</span><span class="t f6 c15" style="left:619.79px;top:901px;letter-spacing:0.60px;">Und</span></div>
</div>
</div>
<div id="vscroll" class="abs"></div>
<div id="vthumb" class="abs"></div>
<div id="hscroll" class="abs"></div>
<svg class="i" style="left:6px;top:919px" width="9" height="11" viewBox="0 0 9 11"><path d="M8 0.5 L1 5.5 L8 10.5 Z" fill="#a3a3a3"/></svg>
<svg class="i" style="left:1023.5px;top:919px" width="9" height="11" viewBox="0 0 9 11"><path d="M1 0.5 L8 5.5 L1 10.5 Z" fill="#a3a3a3"/></svg>
<!-- search row -->
<div class="abs sepv" style="left:35px;top:938px;height:27px"></div>
<div class="abs inp" style="left:39.5px;top:938px;width:238.5px;height:26px"></div>
<div class="abs sepv" style="left:369px;top:938px;height:27px"></div>
<div class="abs inp" style="left:373.5px;top:938px;width:238.5px;height:26px"></div>
<div class="abs sepv" style="left:732px;top:938px;height:27px"></div>
<div class="abs seph" style="left:1px;top:968px;width:1374px"></div>
<div class="abs sepv" style="left:631px;top:972px;height:28px"></div>
<div class="abs sepv" style="left:681px;top:972px;height:28px"></div>
<div class="abs seph" style="left:1px;top:1002px;width:1374px;background:#d6d6d6"></div>
<div class="abs sepv" style="left:113px;top:1004px;height:22px;background:#d4d4d4"></div>
<div class="abs sepv" style="left:190px;top:1004px;height:22px;background:#d4d4d4"></div>
<div class="abs sepv" style="left:267px;top:1004px;height:22px;background:#d4d4d4"></div>
<div class="abs sepv" style="left:380px;top:1004px;height:22px;background:#d4d4d4"></div>
<div class="abs sepv" style="left:493px;top:1004px;height:22px;background:#d4d4d4"></div>
<div class="abs sepv" style="left:570px;top:1004px;height:22px;background:#d4d4d4"></div>
<svg class="i" style="left:0;top:0" width="1375" height="1029" viewBox="0 0 1375 1029"><g transform="translate(6 940)"><circle cx="8" cy="8" r="6.5" fill="none" stroke="#1f4e79" stroke-width="3"/><path d="M13 13L20.6 20.6" fill="none" stroke="#1f4e79" stroke-width="3" stroke-linecap="round"/></g><g transform="translate(282 940)"><circle cx="8" cy="8" r="6.6" fill="none" stroke="#9e9e9e" stroke-width="3.1"/><path d="M13 13L20.8 20.8" fill="none" stroke="#9e9e9e" stroke-width="3.4" stroke-linecap="round"/><text x="5.4" y="11.2" font-family="Liberation Sans, sans-serif" font-size="8.5" font-weight="400" fill="#666" letter-spacing="0">1</text></g><g transform="translate(311 940)"><circle cx="8" cy="8" r="6.6" fill="none" stroke="#9e9e9e" stroke-width="3.1"/><path d="M13 13L20.8 20.8" fill="none" stroke="#9e9e9e" stroke-width="3.4" stroke-linecap="round"/><path d="M8 4.4V10M5.2 8L8 11.2L10.8 8" fill="none" stroke="#7a7a7a" stroke-width="1.9"/></g><g transform="translate(340 940)"><circle cx="8" cy="8" r="6.6" fill="none" stroke="#9e9e9e" stroke-width="3.1"/><path d="M13 13L20.8 20.8" fill="none" stroke="#9e9e9e" stroke-width="3.4" stroke-linecap="round"/><path d="M8 11.6V6M5.2 8L8 4.8L10.8 8" fill="none" stroke="#7a7a7a" stroke-width="1.9"/></g><g transform="translate(616 940)"><circle cx="8" cy="8" r="6.6" fill="none" stroke="#9e9e9e" stroke-width="3.1"/><path d="M13 13L20.8 20.8" fill="none" stroke="#9e9e9e" stroke-width="3.4" stroke-linecap="round"/><text x="-0.4" y="22" font-family="Liberation Sans, sans-serif" font-size="7.4" font-weight="400" fill="#7c7c7c" letter-spacing="-0.3">S→R</text></g><g transform="translate(645 940)"><circle cx="8" cy="8" r="6.6" fill="none" stroke="#9e9e9e" stroke-width="3.1"/><path d="M13 13L20.8 20.8" fill="none" stroke="#9e9e9e" stroke-width="3.4" stroke-linecap="round"/><path d="M8 4.4V10M5.2 8L8 11.2L10.8 8" fill="none" stroke="#7a7a7a" stroke-width="1.9"/><text x="-0.4" y="22" font-family="Liberation Sans, sans-serif" font-size="7.4" font-weight="400" fill="#7c7c7c" letter-spacing="-0.3">S→R</text></g><g transform="translate(674 940)"><circle cx="8" cy="8" r="6.6" fill="none" stroke="#9e9e9e" stroke-width="3.1"/><path d="M13 13L20.8 20.8" fill="none" stroke="#9e9e9e" stroke-width="3.4" stroke-linecap="round"/><path d="M8 11.6V6M5.2 8L8 4.8L10.8 8" fill="none" stroke="#7a7a7a" stroke-width="1.9"/><text x="-0.4" y="22" font-family="Liberation Sans, sans-serif" font-size="7.4" font-weight="400" fill="#7c7c7c" letter-spacing="-0.3">S→R</text></g><g transform="translate(703 940)"><circle cx="8" cy="8" r="6.6" fill="none" stroke="#9e9e9e" stroke-width="3.1"/><path d="M13 13L20.8 20.8" fill="none" stroke="#9e9e9e" stroke-width="3.4" stroke-linecap="round"/><text x="5.2" y="11" font-family="Liberation Sans, sans-serif" font-size="8" font-weight="400" fill="#666" letter-spacing="0">A</text><text x="-0.4" y="22" font-family="Liberation Sans, sans-serif" font-size="7.4" font-weight="400" fill="#7c7c7c" letter-spacing="-0.3">S→R</text></g><g transform="translate(739 940)"><circle cx="8" cy="8" r="6.6" fill="#c9c9c9" stroke="#ababab" stroke-width="3.1"/><path d="M13 13L20.8 20.8" fill="none" stroke="#ababab" stroke-width="3.4" stroke-linecap="round"/></g><g transform="translate(768 940)"><circle cx="8" cy="8" r="6.6" fill="none" stroke="#2d5f94" stroke-width="3"/><path d="M13 13L20.8 20.8" fill="none" stroke="#2d5f94" stroke-width="3.3" stroke-linecap="round"/><path d="M4.2 8H11.8M5 5.6V10.4M11 5.6V10.4" fill="none" stroke="#111" stroke-width="1.8"/></g><g transform="translate(797 940)"><circle cx="8" cy="8" r="6.6" fill="none" stroke="#9e9e9e" stroke-width="3.1"/><path d="M13 13L20.8 20.8" fill="none" stroke="#9e9e9e" stroke-width="3.4" stroke-linecap="round"/><text x="0" y="22" font-family="Liberation Sans, sans-serif" font-size="7.6" font-weight="400" fill="#7a7a7a" letter-spacing="0">123</text></g><g transform="translate(826 940)"><circle cx="8" cy="8" r="6.6" fill="none" stroke="#9e9e9e" stroke-width="3.1"/><path d="M13 13L20.8 20.8" fill="none" stroke="#9e9e9e" stroke-width="3.4" stroke-linecap="round"/><path d="M5.6 3.6L7.8 10M10.4 3.6L8.2 10" fill="none" stroke="#8a8a8a" stroke-width="1.4"/><circle cx="4.6" cy="19.4" r="1.9" fill="none" stroke="#8e8e8e" stroke-width="1.5"/><circle cx="10.4" cy="19.4" r="1.9" fill="none" stroke="#8e8e8e" stroke-width="1.5"/></g><g transform="translate(855 940)"><path d="M.5 .5H8.5L12.5 4.5V15.5H.5Z" fill="#fff" stroke="#b0b0b0" stroke-width="1"/><path d="M8.5 .5V4.5H12.5" fill="#fff" stroke="#b0b0b0" stroke-width="1"/><path d="M2.5 3.5H7M2.5 6H7.5M2.5 8.5H10M2.5 11H10M2.5 13.5H7" fill="none" stroke="#b4b4b4" stroke-width="0.9"/><g transform="translate(8 5)"><path d="M.5 .5H9.5L13.5 4.5V16.5H.5Z" fill="#fff" stroke="#b0b0b0" stroke-width="1"/><path d="M9.5 .5V4.5H13.5" fill="#fff" stroke="#b0b0b0" stroke-width="1"/></g><circle cx="14.4" cy="13.6" r="3" fill="none" stroke="#a8a8a8" stroke-width="1.5"/><path d="M16.6 15.8L20 19.4" fill="none" stroke="#a8a8a8" stroke-width="1.7"/></g><circle cx="649" cy="986" r="10.6" fill="#f6f6f6" stroke="#a9a9a9" stroke-width="1.1"/><path d="M649 986L655 981.6" fill="none" stroke="#a9a9a9" stroke-width="1.4"/><path d="M649.4 986.4C645.4 982.4 642.6 986.6 645 990C646.4 992 648.6 992 650.4 991" fill="none" stroke="#b0b0b0" stroke-width="2"/><path d="M648.6 988.4L652 991.2L648.4 994" fill="none" stroke="#b0b0b0" stroke-width="1.6"/><circle cx="649" cy="986" r="8.6" fill="none" stroke="#bdbdbd" stroke-width="1" stroke-dasharray=".9 3.6"/><g transform="translate(667 984.2)"><path d="M0 0H7L3.5 3.8Z" fill="#a4a4a4"/></g><path d="M689 976.4L691.6 975.2L694 977.2Q699 975 704 977.2L706.4 975.2L709 976.4L708.2 981Q710.4 985 710 989.6L710.2 996.2H688.4L688.6 989.6Q688 985 689.8 981Z" fill="#3a2410"/><path d="M691.4 980.6Q695 978.2 698.6 982.4L699 986.8Q695 989 691 986.4Z" fill="#8a5a1e"/><path d="M706.6 980.6Q703 978.2 699.4 982.4L699 986.8Q703 989 707 986.4Z" fill="#8a5a1e"/><path d="M692.4 982.2L697.6 983.4L696.6 985H693Z" fill="#f2d23a"/><path d="M705.6 982.2L700.4 983.4L701.4 985H705Z" fill="#f2d23a"/><path d="M697.8 982.6H700.2L699.8 987.6L699 989L698.2 987.6Z" fill="#55607a"/><path d="M694 987.6Q699 992 704 987.6L706 990.4Q703 995.4 699 993.6Q695 995.4 692 990.4Z" fill="#f6efe4"/><path d="M690 991.4L696 993.2L693.6 996H689Z" fill="#e8d8c0"/><path d="M703 992L708.6 990.6L709.4 995.6H704Z" fill="#a05a22"/><path d="M717.4 996.4Q718 987 722.6 981Q727.6 975 735.6 975.4Q739.8 976 739 979.4Q737.6 984 731.4 986.2Q726.4 988 723.4 991.6Q721 994.4 719 996.4Z" fill="#e2a468" stroke="#9a5a22" stroke-width="0.9"/><path d="M718.2 996Q720.6 986.4 727 981.4Q731.6 978 737.6 977.6" fill="none" stroke="#f6ead8" stroke-width="1.3"/><path d="M722.6 987.4L725.6 989.6M725 984.2L728.4 987.2M728 981.8L731.6 985.2M731.4 979.6L734.6 983.2M734.6 978L737.4 980.8" fill="none" stroke="#8a4a1a" stroke-width="1.1"/><rect x="1370" y="1014" width="2.4" height="2.4" fill="#b8b8b8"/><rect x="1366" y="1018" width="2.4" height="2.4" fill="#b8b8b8"/><rect x="1370" y="1018" width="2.4" height="2.4" fill="#b8b8b8"/><rect x="1362" y="1022" width="2.4" height="2.4" fill="#b8b8b8"/><rect x="1366" y="1022" width="2.4" height="2.4" fill="#b8b8b8"/><rect x="1370" y="1022" width="2.4" height="2.4" fill="#b8b8b8"/></svg>

<!-- clip panel -->
<div id="cliphdr" class="abs"></div>
<div id="clipbox" class="abs"></div>
<div id="treehl" class="abs"></div>
<div class="abs dotv" style="left:1076px;top:187px;height:488px"></div>
<div class="abs doth" style="left:1077px;top:187px;width:8px"></div>
<div class="abs doth" style="left:1077px;top:209px;width:8px"></div>
<div class="abs doth" style="left:1077px;top:231px;width:8px"></div>
<div class="abs doth" style="left:1077px;top:253px;width:8px"></div>
<div class="abs doth" style="left:1077px;top:275px;width:8px"></div>
<div class="abs doth" style="left:1077px;top:297px;width:8px"></div>
<div class="abs doth" style="left:1077px;top:319px;width:8px"></div>
<div class="abs doth" style="left:1077px;top:341px;width:8px"></div>
<div class="abs doth" style="left:1077px;top:363px;width:8px"></div>
<div class="abs doth" style="left:1077px;top:385px;width:8px"></div>
<div class="abs doth" style="left:1077px;top:407px;width:8px"></div>
<div class="abs doth" style="left:1077px;top:429px;width:8px"></div>
<div class="abs doth" style="left:1077px;top:451px;width:8px"></div>
<div class="abs doth" style="left:1077px;top:473px;width:8px"></div>
<div class="abs doth" style="left:1077px;top:495px;width:8px"></div>
<div class="abs doth" style="left:1077px;top:517px;width:8px"></div>
<div class="abs doth" style="left:1077px;top:539px;width:8px"></div>
<div class="abs doth" style="left:1077px;top:561px;width:8px"></div>
<div class="abs doth" style="left:1077px;top:583px;width:8px"></div>
<div class="abs doth" style="left:1077px;top:605px;width:8px"></div>
<div class="abs doth" style="left:1077px;top:627px;width:8px"></div>
<div class="abs doth" style="left:1077px;top:649px;width:8px"></div>
<div class="abs doth" style="left:1077px;top:671px;width:8px"></div>
<svg class="i" style="left:1073px;top:688px" width="7" height="11" viewBox="0 0 7 11"><path d="M1.5 1 L5.5 5.5 L1.5 10" fill="none" stroke="#a0a0a0" stroke-width="1.2"/></svg>

<svg class="i" style="left:0;top:0" width="1375" height="1029" viewBox="0 0 1375 1029"><g transform="translate(1072 112.6) scale(0.98 0.98)"><rect x=".5" y="1.4" width="16.5" height="19.4" rx="1.6" fill="#f0d138" stroke="#8b6c0c"/><ellipse cx="8.7" cy="1.3" rx="3.7" ry="1.05" fill="#8a7a2a" stroke="#5a4a10" stroke-width=".9"/><g transform="translate(7.3 4.8)"><path d="M.5 .5H9.7L14.2 5V16.5H.5Z" fill="#fff" stroke="#6f6f6f" stroke-width="1"/><path d="M9.7 .5V5H14.2" fill="#fff" stroke="#6f6f6f" stroke-width="1"/></g><g transform="translate(9.3 7.2)"><path d="M2.3 0L5.6 8M7.7 0L4.4 8" fill="none" stroke="#c9a227" stroke-width="1.5"/><ellipse cx="2.7" cy="10.4" rx="2.2" ry="1.7" fill="none" stroke="#4e9a26" stroke-width="1.2"/><ellipse cx="7.3" cy="10.4" rx="2.2" ry="1.7" fill="none" stroke="#4e9a26" stroke-width="1.2"/></g></g><path d="M1336.5 118.5H1342.5L1341.2 119.8V123.6L1344.6 126.4H1333.6L1337.4 123.6V119.8Z" fill="#ececec" stroke="#6e6e6e" stroke-width="1"/><path d="M1339.2 126.4V131" fill="none" stroke="#6e6e6e" stroke-width="1.4"/><rect x="1352" y="116" width="16" height="16" fill="#cf4a50"/><path d="M1357 121.2L1362 126.2M1362 121.2L1357 126.2" fill="none" stroke="#fff" stroke-width="1.7"/><g transform="translate(1069 146)"><path d="M.5 .5H12L17.5 6V21.5H.5Z" fill="#fff" stroke="#6f6f6f" stroke-width="1"/><path d="M12 .5V6H17.5" fill="#fff" stroke="#6f6f6f" stroke-width="1"/></g><g transform="translate(1096 146)"><g transform="translate(4 0)"><path d="M.5 .5H9.5L14 5V9.5H.5Z" fill="#fff" stroke="#6f6f6f" stroke-width="1"/><path d="M9.5 .5V5H14" fill="#fff" stroke="#6f6f6f" stroke-width="1"/></g><path d="M.5 21.5V7.2Q.5 5.6 2 5.6H4.2V9.6H8.2L10.6 7.6H21.5V21.5Z" fill="#efd134" stroke="#8b6c0c" stroke-width="1"/><path d="M.5 9.6H4.2" fill="none" stroke="#8b6c0c" stroke-width="1"/></g><g transform="translate(1124.8 155)"><path d="M0 0H7.6L3.8 4.1Z" fill="#000"/></g><g transform="translate(1139 146)"><rect x=".5" y=".5" width="21" height="21" rx="2.3" fill="#7ac03a" stroke="#2f6a10"/><rect x="4.95" y=".8" width="11" height="6.6" rx="1.5" fill="#3a7a17"/><rect x="7.26" y="1.6" width="2.42" height="4.4" fill="#8ed24e"/><rect x="3.96" y="9.9" width="14.3" height="11.1" fill="#fff" stroke="#2f6a10"/></g><rect x="1167.9" y="143" width="1" height="28" fill="#a6a6a6"/><g transform="translate(1175 146)"><rect x=".5" y="1.4" width="16.5" height="19.4" rx="1.6" fill="#f0d138" stroke="#8b6c0c"/><ellipse cx="8.7" cy="1.3" rx="3.7" ry="1.05" fill="#8a7a2a" stroke="#5a4a10" stroke-width=".9"/><g transform="translate(7.3 4.8)"><path d="M.5 .5H9.7L14.2 5V16.5H.5Z" fill="#fff" stroke="#6f6f6f" stroke-width="1"/><path d="M9.7 .5V5H14.2" fill="#fff" stroke="#6f6f6f" stroke-width="1"/></g><g transform="translate(9.3 7.2)"><path d="M2.3 0L5.6 8M7.7 0L4.4 8" fill="none" stroke="#c9a227" stroke-width="1.5"/><ellipse cx="2.7" cy="10.4" rx="2.2" ry="1.7" fill="none" stroke="#4e9a26" stroke-width="1.2"/><ellipse cx="7.3" cy="10.4" rx="2.2" ry="1.7" fill="none" stroke="#4e9a26" stroke-width="1.2"/></g></g><rect x="1204" y="143" width="1" height="28" fill="#a6a6a6"/><g transform="translate(1215 146)"><path d="M13.4 0L8.4 14.5" fill="none" stroke="#c4a22a" stroke-width="2.2"/><ellipse cx="4.3" cy="18.6" rx="3.5" ry="2.5" fill="none" stroke="#4a9424" stroke-width="2.2" transform="rotate(-15 4.3 18.6)"/><ellipse cx="13.7" cy="18.6" rx="3.5" ry="2.5" fill="none" stroke="#4a9424" stroke-width="2.2" transform="rotate(15 13.7 18.6)"/><path d="M7.4 16.8L9 13.5L10.6 16.8" fill="none" stroke="#4a9424" stroke-width="2.2"/></g><path d="M1211.5 157.5V148Q1211.5 146.5 1213 146.5H1216.6L1218.4 148.4H1224.5V157.5Z" fill="#efd134" stroke="#8b6c0c" stroke-width="1"/><g transform="translate(1244 146)"><path d="M13.4 0L8.4 14.5" fill="none" stroke="#c4a22a" stroke-width="2.2"/><ellipse cx="4.3" cy="18.6" rx="3.5" ry="2.5" fill="none" stroke="#4a9424" stroke-width="2.2" transform="rotate(-15 4.3 18.6)"/><ellipse cx="13.7" cy="18.6" rx="3.5" ry="2.5" fill="none" stroke="#4a9424" stroke-width="2.2" transform="rotate(15 13.7 18.6)"/><path d="M7.4 16.8L9 13.5L10.6 16.8" fill="none" stroke="#4a9424" stroke-width="2.2"/></g><path d="M1245 146.5H1249.2V150.8H1253.6V155H1249.2V159.4H1245V155H1240.6V150.8H1245Z" fill="#7ac03a" stroke="#3c7a1a" stroke-width="1.1" stroke-linejoin="round"/><g transform="translate(1269 146)"><path d="M4.6 0L9.6 14.5M13.6 0L8.6 14.5" fill="none" stroke="#c4a22a" stroke-width="2.2"/><path d="M20.2 2.2L11.4 11.6" fill="none" stroke="#a8891c" stroke-width="3.2"/><path d="M20.2 2.2L11.4 11.6" fill="none" stroke="#edd238" stroke-width="1.8"/><ellipse cx="4.3" cy="18.6" rx="3.5" ry="2.5" fill="none" stroke="#4a9424" stroke-width="2.2" transform="rotate(-15 4.3 18.6)"/><ellipse cx="13.7" cy="18.6" rx="3.5" ry="2.5" fill="none" stroke="#4a9424" stroke-width="2.2" transform="rotate(15 13.7 18.6)"/><path d="M7.4 16.8L9 13.5L10.6 16.8" fill="none" stroke="#4a9424" stroke-width="2.2"/></g><rect x="1298" y="143" width="1" height="28" fill="#a6a6a6"/><path d="M1308.8 153.4H1319.6V162H1308.8Z" fill="#e8c98a" stroke="#6b5a30" stroke-width="1"/><path d="M1306 153.6L1314.2 146.3L1322 153.6Z" fill="#f0c880" stroke="#6b5a30" stroke-width="1"/><rect x="1317.4" y="147.4" width="1.8" height="3.4" fill="#5a4a2a"/><rect x="1310.6" y="155.4" width="3.6" height="3.2" fill="#fff" stroke="#5a5a40" stroke-width=".8"/><rect x="1316.2" y="156.4" width="1.8" height="4.6" fill="#7a5a20"/><path d="M1308.6 167.4Q1305.2 167.4 1305.4 164.4Q1305.8 162 1308.6 162Q1309.6 159.6 1312.2 160.4Q1314 158.6 1316.2 159.6Q1318 158.8 1319.6 160.4Q1320.4 156.4 1321.6 155.4Q1324 158 1323.6 161.4Q1327 161.8 1326.8 164.8Q1326.6 167.4 1323.6 167.4Z" fill="#e6f0fb" stroke="#4a74a8" stroke-width="1"/></svg>

<div class="ln"><span class="t f1 c2" style="left:34.55px;top:16px;letter-spacing:-0.32px;transform:scaleX(0.9489);">EditPad </span><span class="t f1 c2" style="left:88.19px;top:16px;letter-spacing:-0.09px;transform:scaleX(1.0146);">Lite </span><span class="t f1 c2" style="left:115.79px;top:16px;letter-spacing:0.13px;transform:scaleX(1.0458);">8 </span><span class="t f1 c2" style="left:127.69px;top:16px;letter-spacing:0.45px;transform:scaleX(1.3078);">- </span><span class="t f1 c2" style="left:139.02px;top:16px;letter-spacing:-0.17px;transform:scaleX(0.9925);">[*P:\</span><span class="t f1 c2" style="left:167.37px;top:16px;letter-spacing:-0.32px;transform:scaleX(0.9455);">Eigene </span><span class="t f1 c2" style="left:214.88px;top:16px;letter-spacing:-0.32px;transform:scaleX(1.0026);">Dateien</span><span class="t f1 c2" style="left:266.09px;top:16px;transform:scaleX(1.3156);">\</span><span class="t f1 c2" style="left:272.35px;top:16px;letter-spacing:-0.32px;transform:scaleX(0.9519);">Eigene </span><span class="t f1 c2" style="left:320.82px;top:16px;letter-spacing:-0.32px;transform:scaleX(0.9231);">Webs</span><span class="t f1 c2" style="left:356.75px;top:16px;transform:scaleX(1.3000);">\</span><span class="t f1 c2" style="left:362.26px;top:16px;letter-spacing:-0.32px;transform:scaleX(1.0096);">Teddyklinik</span><span class="t f1 c2" style="left:435.35px;top:16px;transform:scaleX(1.3156);">\</span><span class="t f1 c2" style="left:442.29px;top:16px;letter-spacing:-0.16px;transform:scaleX(1.0024);">index.html]</span></div>
<div class="ln"><span class="t f1 c2" style="left:9.98px;top:50px;letter-spacing:0.28px;transform:scaleX(1.0135);"><u>D</u>atei </span><span class="t f1 c2" style="left:61.84px;top:50px;letter-spacing:-0.09px;transform:scaleX(1.0044);"><u>B</u>earbeiten </span><span class="t f1 c2" style="left:150.13px;top:50px;letter-spacing:-0.32px;transform:scaleX(0.9590);"><u>S</u>uchen </span><span class="t f1 c2" style="left:212.85px;top:50px;letter-spacing:-0.32px;transform:scaleX(0.9601);"><u>G</u>ehe </span><span class="t f1 c2" style="left:263.87px;top:50px;letter-spacing:-0.32px;transform:scaleX(0.9858);">Aus<u>w</u>ahl </span><span class="t f1 c2" style="left:335.04px;top:50px;letter-spacing:-0.32px;transform:scaleX(0.9262);">E<u>x</u>tras </span><span class="t f1 c2" style="left:389.14px;top:50px;letter-spacing:-0.11px;"><u>U</u>mwandeln </span><span class="t f1 c2" style="left:484.36px;top:50px;letter-spacing:0.10px;transform:scaleX(1.0022);"><u>O</u>ptionen </span><span class="t f1 c2" style="left:563.26px;top:50px;letter-spacing:-0.32px;transform:scaleX(0.9804);"><u>A</u>nsicht </span><span class="t f1 c2" style="left:626.44px;top:50px;letter-spacing:0.45px;transform:scaleX(1.0172);"><u>H</u>ilfe </span></div>
<div class="ln"><span class="t f2 c3" style="left:36.09px;top:110px;letter-spacing:-0.10px;transform:scaleX(0.9941);">index.html</span></div>
<div class="ln"><span class="t f1 c2" style="left:1099.45px;top:114px;letter-spacing:-0.19px;transform:scaleX(1.0095);">Clip-Sammlung</span></div>
<div class="ln"><span class="t f1 c2" style="left:1087.26px;top:176px;letter-spacing:-0.10px;transform:scaleX(0.9988);">New HTML file</span></div>
<div class="ln"><span class="t f1 c2" style="left:1087.27px;top:198px;letter-spacing:-0.32px;transform:scaleX(0.9923);">Paragraph</span></div>
<div class="ln"><span class="t f1 c2" style="left:1087.26px;top:220px;letter-spacing:-0.29px;">Line break</span></div>
<div class="ln"><span class="t f1 c2" style="left:1087.25px;top:242px;letter-spacing:0.06px;">Horizontal rule</span></div>
<div class="ln"><span class="t f1 c2" style="left:1087.54px;top:264px;letter-spacing:-0.32px;transform:scaleX(0.9633);">Link</span></div>
<div class="ln"><span class="t f1 c2" style="left:1087.38px;top:286px;letter-spacing:0.37px;transform:scaleX(1.0156);">Bold</span></div>
<div class="ln"><span class="t f1 c2" style="left:1087.40px;top:308px;letter-spacing:0.22px;transform:scaleX(1.0100);">Italic</span></div>
<div class="ln"><span class="t f1 c2" style="left:1087.31px;top:330px;letter-spacing:-0.14px;">Underline</span></div>
<div class="ln"><span class="t f1 c2" style="left:1087.35px;top:352px;letter-spacing:-0.32px;transform:scaleX(0.9722);">Emphasis</span></div>
<div class="ln"><span class="t f1 c2" style="left:1087.56px;top:374px;letter-spacing:-0.27px;">Strong</span></div>
<div class="ln"><span class="t f1 c2" style="left:1087.39px;top:396px;letter-spacing:-0.12px;transform:scaleX(1.0028);">Monospaced</span></div>
<div class="ln"><span class="t f1 c2" style="left:1087.26px;top:418px;letter-spacing:0.03px;transform:scaleX(0.9968);">Bulleted list</span></div>
<div class="ln"><span class="t f1 c2" style="left:1087.39px;top:440px;letter-spacing:-0.04px;">Numbered list</span></div>
<div class="ln"><span class="t f1 c2" style="left:1087.26px;top:462px;letter-spacing:-0.07px;">List item</span></div>
<div class="ln"><span class="t f1 c2" style="left:1087.25px;top:484px;letter-spacing:-0.08px;transform:scaleX(0.9989);">Heading 1</span></div>
<div class="ln"><span class="t f1 c2" style="left:1087.25px;top:506px;letter-spacing:-0.02px;transform:scaleX(1.0045);">Heading 2</span></div>
<div class="ln"><span class="t f1 c2" style="left:1087.25px;top:528px;letter-spacing:-0.02px;transform:scaleX(0.9989);">Heading 3</span></div>
<div class="ln"><span class="t f1 c2" style="left:1087.39px;top:550px;letter-spacing:0.00px;transform:scaleX(1.0027);">Heading 4</span></div>
<div class="ln"><span class="t f1 c2" style="left:1087.25px;top:572px;letter-spacing:-0.02px;transform:scaleX(0.9988);">Heading 5</span></div>
<div class="ln"><span class="t f1 c2" style="left:1087.25px;top:594px;letter-spacing:-0.02px;transform:scaleX(0.9989);">Heading 6</span></div>
<div class="ln"><span class="t f1 c2" style="left:1086.99px;top:616px;letter-spacing:-0.32px;transform:scaleX(1.0210);">Table</span></div>
<div class="ln"><span class="t f1 c2" style="left:1087.01px;top:638px;letter-spacing:-0.32px;transform:scaleX(1.0183);">Table row</span></div>
<div class="ln"><span class="t f1 c2" style="left:1087.01px;top:660px;letter-spacing:-0.20px;transform:scaleX(1.0181);">Table cell</span></div>
<div class="ln"><span class="t f1 c2" style="left:1087.36px;top:682px;letter-spacing:-0.32px;transform:scaleX(0.9694);">Forms</span></div>
<div class="ln"><span class="t f3 c4" style="left:40.95px;top:940px;letter-spacing:-0.32px;transform:scaleX(0.9268);">Suchen </span><span class="t f3 c4" style="left:376.17px;top:940px;letter-spacing:-0.32px;transform:scaleX(0.8979);">Ersetzen</span></div>
<div class="ln"><span class="t f1 c2" style="left:5.92px;top:976px;letter-spacing:-0.32px;transform:scaleX(0.9702);"><u>R</u>egex </span><span class="t f1 c5" style="left:55.05px;top:976px;letter-spacing:-0.25px;transform:scaleX(0.9827);">Fr<u>e</u>i </span><span class="t f1 c5" style="left:86.82px;top:976px;letter-spacing:-0.32px;transform:scaleX(0.9793);"><u>P</u>unkt </span><span class="t f1 c2" style="left:131.31px;top:976px;letter-spacing:-0.09px;transform:scaleX(1.0109);"><u>G</u>roß/klein </span><span class="t f1 c2" style="left:209.27px;top:976px;letter-spacing:-0.32px;transform:scaleX(0.9602);"><u>A</u>npassen </span><span class="t f1 c2" style="left:279.59px;top:976px;letter-spacing:-0.12px;transform:scaleX(0.9982);"><u>W</u>örter </span><span class="t f1 c2" style="left:332.37px;top:976px;letter-spacing:-0.01px;"><u>D</u>ateien </span><span class="t f1 c5" style="left:393.25px;top:976px;letter-spacing:-0.32px;transform:scaleX(0.9729);">Aus<u>w</u>ahl </span><span class="t f1 c2" style="left:454.56px;top:976px;letter-spacing:-0.18px;transform:scaleX(0.9901);"><u>S</u>chleife </span><span class="t f1 c2" style="left:515.54px;top:976px;letter-spacing:0.01px;transform:scaleX(0.9915);"><u>Z</u>eile </span><span class="t f1 c2" style="left:555.89px;top:976px;letter-spacing:-0.32px;transform:scaleX(0.9937);"><u>U</u>mkehren </span></div>
<div class="ln"><span class="t f1 c2" style="left:40.64px;top:1005px;letter-spacing:-0.32px;transform:scaleX(0.9339);">14: 1 </span><span class="t f1 c2" style="left:120.47px;top:1005px;letter-spacing:-0.32px;transform:scaleX(1.0020);">Geändert </span><span class="t f1 c2" style="left:198.74px;top:1005px;letter-spacing:-0.24px;transform:scaleX(0.9919);">Einfügen </span><span class="t f1 c2" style="left:306.20px;top:1005px;letter-spacing:-0.32px;transform:scaleX(0.8443);">CRLF </span><span class="t f1 c2" style="left:388.23px;top:1005px;letter-spacing:-0.31px;">Windows 1252 </span><span class="t f1 c2" style="left:521.64px;top:1005px;letter-spacing:0.45px;transform:scaleX(1.1110);">--- </span><span class="t f1 c2" style="left:572.51px;top:1005px;letter-spacing:-0.32px;transform:scaleX(0.9798);">EditPad Lite 8.4.1 x64 </span><span class="t f1 c2" style="left:721.39px;top:1005px;letter-spacing:-0.32px;transform:scaleX(0.9565);">— </span><span class="t f1 c2" style="left:743.04px;top:1005px;letter-spacing:-0.12px;">Copyright © 1996-2022 </span><span class="t f1 c2" style="left:907.85px;top:1005px;letter-spacing:-0.32px;transform:scaleX(0.9443);">Jan Goyvaerts </span><span class="t f1 c2" style="left:1005.86px;top:1005px;letter-spacing:0.45px;">— </span><span class="t f1 c2" style="left:1028.42px;top:1005px;letter-spacing:0.13px;transform:scaleX(1.0021);">https://www.editpadlite.com/de.html </span></div>

</body>
</html>
